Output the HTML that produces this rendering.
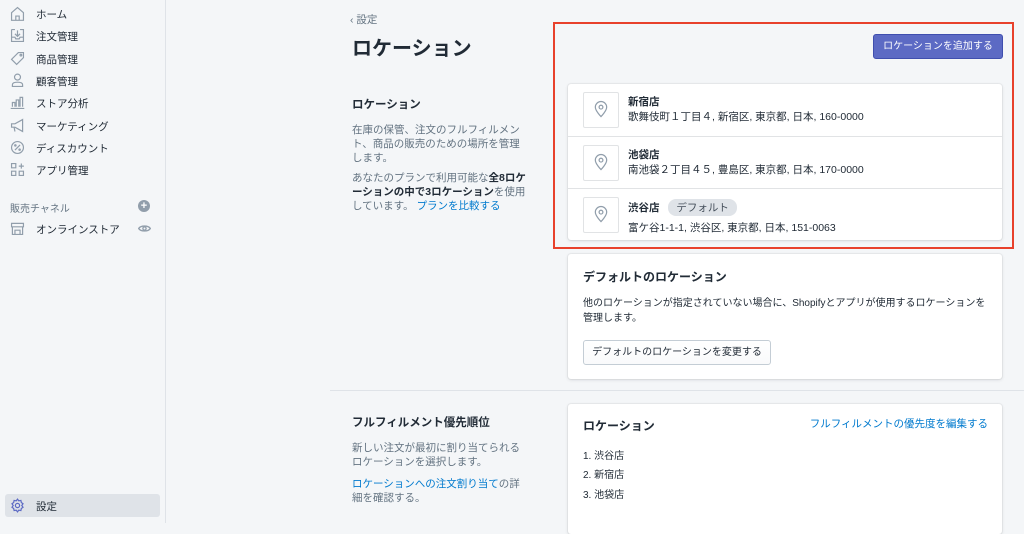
<!DOCTYPE html>
<html><head><meta charset="utf-8"><style>
*{box-sizing:border-box;margin:0;padding:0}
body{width:1024px;height:523px;overflow:hidden;background:#f4f6f8;font-family:"Liberation Sans","Noto Sans CJK JP",sans-serif;color:#212b36;font-size:11px;position:relative}
.a{position:absolute}
.side{left:0;top:0;width:166px;height:523px;background:#f4f6f8;border-right:1px solid #dfe3e8}
.ni{position:absolute;left:36px;font-size:10.5px;color:#212b36}
.ic{position:absolute;left:9px;width:17px;height:17px}
.card{background:#fff;border-radius:3px;box-shadow:0 0 0 1px rgba(63,63,68,.05),0 1px 3px rgba(63,63,68,.15)}
.row{position:absolute;left:0;width:434px;height:52px;border-top:1px solid #e1e3e5}
.pin{position:absolute;left:15px;top:8px;width:36px;height:36px;border:1px solid #e1e3e5;border-radius:2px}
.nm{position:absolute;left:60px;top:10px;font-weight:bold;font-size:10.5px}
.ad{position:absolute;left:60px;top:25px;font-size:10.5px;color:#212b36;white-space:nowrap}
.p{color:#637381;font-size:10.5px;line-height:14px}
.lnk{color:#007ace}
.nw{white-space:nowrap}
</style></head><body>
<div class="a side">
<svg class="ic" style="top:5px" viewBox="0 0 20 20" fill="none" stroke="#919eab" stroke-width="1.4"><path d="M3 9l7-6 7 6v9H3z M8 18v-5h4v5"/></svg><div class="ni" style="top:7px">ホーム</div>
<svg class="ic" style="top:27px" viewBox="0 0 20 20" fill="none" stroke="#919eab" stroke-width="1.4"><path d="M3 3h4 M13 3h4v14H3V3 M3 12h4l1 2h4l1-2h4 M10 4v6 M7 8l3 3 3-3"/></svg><div class="ni" style="top:29px">注文管理</div>
<svg class="ic" style="top:50px" viewBox="0 0 20 20" fill="none" stroke="#919eab" stroke-width="1.4"><path d="M11 3h6v6l-8 8-6-6z"/><circle cx="14" cy="6" r="1"/></svg><div class="ni" style="top:52px">商品管理</div>
<svg class="ic" style="top:72px" viewBox="0 0 20 20" fill="none" stroke="#919eab" stroke-width="1.4"><circle cx="10" cy="6" r="3.5"/><path d="M4 17v-2c0-2 2-3 6-3s6 1 6 3v2z"/></svg><div class="ni" style="top:74px">顧客管理</div>
<svg class="ic" style="top:94px" viewBox="0 0 20 20" fill="none" stroke="#919eab" stroke-width="1.4"><path d="M2 17h16 M4 15V10h3v5 M8.5 15V7h3v8 M13 15V4h3v11"/></svg><div class="ni" style="top:96px">ストア分析</div>
<svg class="ic" style="top:117px" viewBox="0 0 20 20" fill="none" stroke="#919eab" stroke-width="1.4"><path d="M3 8h4l9-5v14l-9-5H3z M6 12l1 5"/></svg><div class="ni" style="top:119px">マーケティング</div>
<svg class="ic" style="top:139px" viewBox="0 0 20 20" fill="none" stroke="#919eab" stroke-width="1.4"><circle cx="10" cy="10" r="7"/><path d="M7 13l6-6"/><circle cx="7.5" cy="7.5" r=".8"/><circle cx="12.5" cy="12.5" r=".8"/></svg><div class="ni" style="top:141px">ディスカウント</div>
<svg class="ic" style="top:161px" viewBox="0 0 20 20" fill="none" stroke="#919eab" stroke-width="1.4"><path d="M3 3h5v5H3z M3 12h5v5H3z M12 12h5v5h-5z M14.5 3v6 M11.5 6h6"/></svg><div class="ni" style="top:163px">アプリ管理</div>
<div class="a" style="left:10px;top:200px;color:#637381;font-size:10px">販売チャネル</div>
<div class="a" style="left:138px;top:200px;width:12px;height:12px;border-radius:50%;background:#919eab;color:#fff;font-size:11px;line-height:12px;text-align:center;font-weight:bold">+</div>
<svg class="ic" style="top:220px" viewBox="0 0 20 20" fill="none" stroke="#919eab" stroke-width="1.4"><path d="M3 4h14v4H3z M4 8v9h12V8 M7 17v-5h6v5"/></svg><div class="ni" style="top:222px">オンラインストア</div>
<svg class="a" style="left:138px;top:223px" width="13" height="11" viewBox="0 0 20 14" fill="none" stroke="#919eab" stroke-width="2"><path d="M1 7c3-5 15-5 18 0-3 5-15 5-18 0z"/><circle cx="10" cy="7" r="2.5"/></svg>
<div class="a" style="left:5px;top:494px;width:155px;height:23px;background:#dfe3e8;border-radius:3px"></div>
<svg class="ic" style="top:497px" viewBox="0 0 20 20" fill="none" stroke="#5c6ac4" stroke-width="1.4"><circle cx="10" cy="10" r="2.5"/><path d="M10 2.5l1.5 2 2.5-.5.5 2.5 2 1.5-1.5 2 1.5 2-2 1.5-.5 2.5-2.5-.5-1.5 2-1.5-2-2.5.5-.5-2.5-2-1.5 1.5-2-1.5-2 2-1.5.5-2.5 2.5.5z"/></svg><div class="ni" style="top:499px">設定</div>
</div>

<div class="a" style="left:350px;top:12px;color:#637381;font-size:10.5px">‹ 設定</div>
<div class="a nw" style="left:352px;top:32px;font-size:20px;font-weight:bold">ロケーション</div>
<div class="a" style="left:352px;top:96px;font-size:11.5px;font-weight:bold">ロケーション</div>
<div class="a p" style="left:352px;top:123px;width:172px">在庫の保管、注文のフルフィルメント、商品の販売のための場所を管理します。</div>
<div class="a p" style="left:352px;top:171px;width:174px">あなたのプランで利用可能な<b style="color:#212b36">全8ロケーションの中で3ロケーション</b>を使用しています。 <span class="lnk">プランを比較する</span></div>

<div class="a" style="left:553px;top:22px;width:461px;height:227px;border:2px solid #e8412c"></div>
<div class="a nw" style="left:873px;top:34px;width:130px;height:25px;background:#5c6ac4;border:1px solid #3f4eae;border-radius:3px;color:#fff;font-size:10px;line-height:23px;text-align:center">ロケーションを追加する</div>

<div class="a card" style="left:568px;top:84px;width:434px;height:156px">
<div class="row" style="top:0;border-top:none"><svg class="pin" viewBox="0 0 36 36" fill="none" stroke="#919eab" stroke-width="1.3"><path d="M18 25s-6-6-6-10a6 6 0 0112 0c0 4-6 10-6 10z"/><circle cx="18" cy="15" r="2"/></svg><div class="nm">新宿店</div><div class="ad">歌舞伎町１丁目４, 新宿区, 東京都, 日本, 160-0000</div></div>
<div class="row" style="top:52px"><svg class="pin" viewBox="0 0 36 36" fill="none" stroke="#919eab" stroke-width="1.3"><path d="M18 25s-6-6-6-10a6 6 0 0112 0c0 4-6 10-6 10z"/><circle cx="18" cy="15" r="2"/></svg><div class="nm">池袋店</div><div class="ad">南池袋２丁目４５, 豊島区, 東京都, 日本, 170-0000</div></div>
<div class="row" style="top:104px"><svg class="pin" viewBox="0 0 36 36" fill="none" stroke="#919eab" stroke-width="1.3"><path d="M18 25s-6-6-6-10a6 6 0 0112 0c0 4-6 10-6 10z"/><circle cx="18" cy="15" r="2"/></svg><div class="nm">渋谷店 <span style="display:inline-block;margin-left:6px;background:#dfe3e8;border-radius:8px;padding:1px 8px;font-weight:normal;color:#454f5b">デフォルト</span></div><div class="ad" style="top:31px">富ケ谷1-1-1, 渋谷区, 東京都, 日本, 151-0063</div></div>
</div>

<div class="a card" style="left:568px;top:254px;width:434px;height:125px">
<div class="a nw" style="left:15px;top:14px;font-size:12px;font-weight:bold">デフォルトのロケーション</div>
<div class="a" style="left:15px;top:42px;width:406px;font-size:10px;line-height:15px">他のロケーションが指定されていない場合に、Shopifyとアプリが使用するロケーションを管理します。</div>
<div class="a nw" style="left:15px;top:86px;width:188px;height:25px;border:1px solid #c4cdd5;border-radius:3px;font-size:10px;line-height:23px;text-align:center;background:linear-gradient(#fff,#f9fafb)">デフォルトのロケーションを変更する</div>
</div>

<div class="a" style="left:330px;top:390px;width:694px;height:1px;background:#dfe3e8"></div>
<div class="a nw" style="left:352px;top:414px;font-size:11.5px;font-weight:bold">フルフィルメント優先順位</div>
<div class="a p" style="left:352px;top:441px;width:172px">新しい注文が最初に割り当てられるロケーションを選択します。</div>
<div class="a p" style="left:352px;top:477px;width:172px"><span class="lnk">ロケーションへの注文割り当て</span>の詳細を確認する。</div>
<div class="a card" style="left:568px;top:404px;width:434px;height:130px">
<div class="a nw" style="left:15px;top:13px;font-size:12px;font-weight:bold">ロケーション</div>
<div class="a lnk nw" style="right:14px;top:12px;font-size:10.5px">フルフィルメントの優先度を編集する</div>
<div class="a" style="left:15px;top:43px;font-size:10px">1. 渋谷店</div>
<div class="a" style="left:15px;top:62px;font-size:10px">2. 新宿店</div>
<div class="a" style="left:15px;top:82px;font-size:10px">3. 池袋店</div>
</div>
</body></html>
